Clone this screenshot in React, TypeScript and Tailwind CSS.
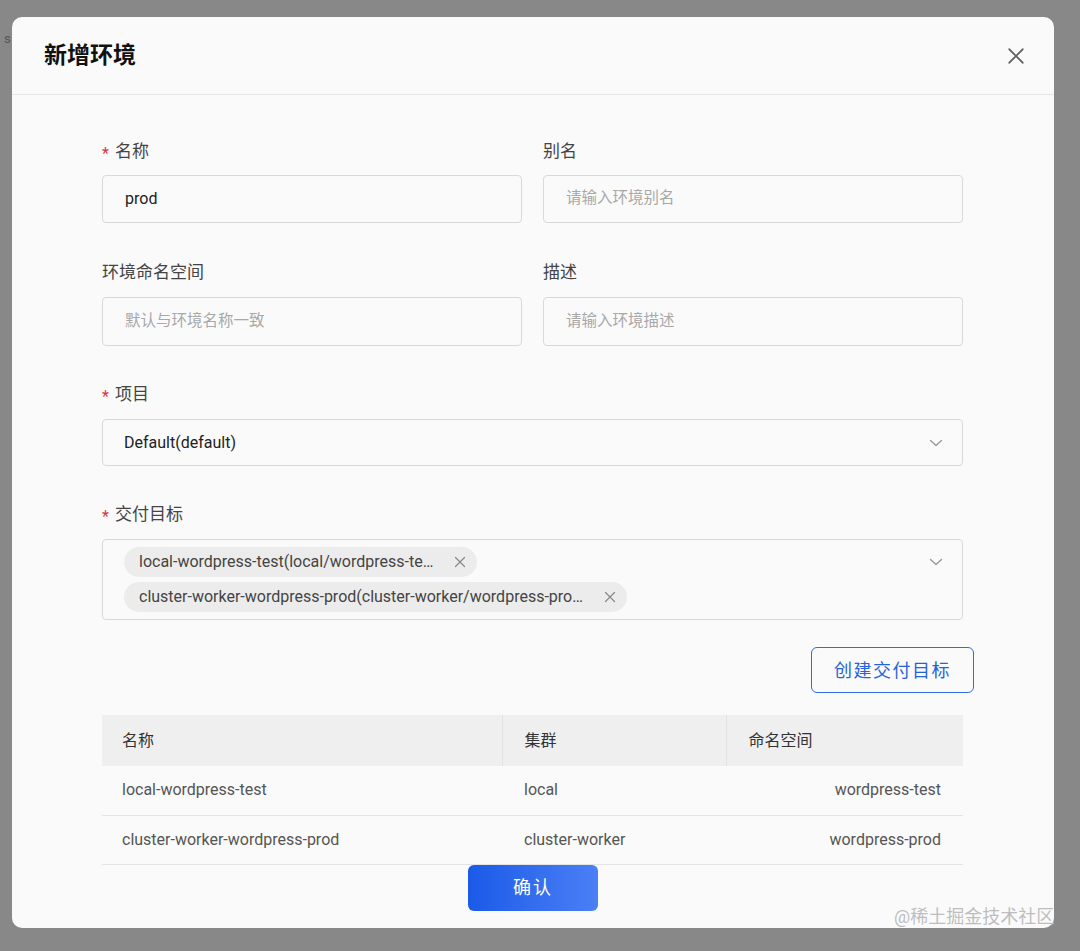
import React from "react";

const font = "font-['Roboto','Noto_Sans_CJK_SC',sans-serif]";

function Label({ text, required }: { text: string; required?: boolean }) {
  return (
    <div className="flex h-6 items-center text-[17px] text-[#444]">
      {required && <span className="mr-[6px] mt-[3px] text-[16px] text-[#d9363e]">*</span>}
      <span>{text}</span>
    </div>
  );
}

function Chevron() {
  return (
    <svg width="16" height="16" viewBox="0 0 16 16" fill="none" className="text-[#999]">
      <path d="M2.5 5.5 L8 10.5 L13.5 5.5" stroke="currentColor" strokeWidth="1.4" strokeLinecap="round" strokeLinejoin="round" />
    </svg>
  );
}

function Cross({ size = 12, color = "#777" }: { size?: number; color?: string }) {
  return (
    <svg width={size} height={size} viewBox="0 0 12 12" fill="none">
      <path d="M1.5 1.5 L10.5 10.5 M10.5 1.5 L1.5 10.5" stroke={color} strokeWidth="1.2" strokeLinecap="round" />
    </svg>
  );
}

function Tag({ text }: { text: string }) {
  return (
    <div className="flex h-[30px] w-fit items-center rounded-full bg-[#ececec] pl-[15px] pr-[9px] text-[16px] text-[#444]">
      <span>{text}</span>
      <span className="ml-[19px] flex h-4 w-4 items-center justify-center">
        <Cross size={12} color="#888" />
      </span>
    </div>
  );
}

const rows = [
  { name: "local-wordpress-test", cluster: "local", ns: "wordpress-test" },
  { name: "cluster-worker-wordpress-prod", cluster: "cluster-worker", ns: "wordpress-prod" },
];

export default function App() {
  return (
    <div className={`relative h-[951px] w-[1080px] overflow-hidden bg-[#888888] ${font}`}>
      <span className="absolute left-[4px] top-[29px] text-[13px] text-[#555]">s</span>

      <div className="ml-[12px] mt-[17px] flex h-[911px] w-[1042px] flex-col rounded-[10px] bg-[#fafafa]">
        {/* header */}
        <div className="flex h-[78px] shrink-0 items-center justify-between border-b border-[#e6e6e6] pl-[32px] pr-[26px]">
          <h2 className="mt-[2px] text-[23px] font-bold text-[#111]">新增环境</h2>
          <button className="flex h-6 w-6 items-center justify-center">
            <Cross size={18} color="#666" />
          </button>
        </div>

        {/* body */}
        <div className="ml-[90px] flex w-[861px] flex-col pt-[45px]">
          <div className="grid grid-cols-2 gap-x-[21px]">
            <div>
              <Label text="名称" required />
              <div className="mt-[11px] flex h-[48px] items-center rounded-[4px] border border-[#d9d9d9] bg-[#fafafa] px-[22px] text-[16px] text-[#222]">
                prod
              </div>
            </div>
            <div>
              <Label text="别名" />
              <div className="mt-[11px] flex h-[48px] items-center rounded-[4px] border border-[#d9d9d9] bg-[#fafafa] px-[22px] text-[15.5px] text-[#a8a8a8]">
                请输入环境别名
              </div>
            </div>
            <div className="mt-[38px]">
              <Label text="环境命名空间" />
              <div className="mt-[12px] flex h-[49px] items-center rounded-[4px] border border-[#d9d9d9] bg-[#fafafa] px-[22px] text-[15.5px] text-[#a8a8a8]">
                默认与环境名称一致
              </div>
            </div>
            <div className="mt-[38px]">
              <Label text="描述" />
              <div className="mt-[12px] flex h-[49px] items-center rounded-[4px] border border-[#d9d9d9] bg-[#fafafa] px-[22px] text-[15.5px] text-[#a8a8a8]">
                请输入环境描述
              </div>
            </div>
          </div>

          <div className="mt-[37px]">
            <Label text="项目" required />
            <div className="mt-[12px] flex h-[47px] items-center justify-between rounded-[4px] border border-[#d9d9d9] bg-[#fafafa] pl-[21px] pr-[18px] text-[16px] text-[#222]">
              <span>Default(default)</span>
              <Chevron />
            </div>
          </div>

          <div className="mt-[37px]">
            <Label text="交付目标" required />
            <div className="mt-[12px] flex h-[81px] items-start justify-between rounded-[4px] border border-[#d9d9d9] bg-[#fafafa] pl-[21px] pr-[18px] pt-[7px]">
              <div className="flex flex-col gap-[5px]">
                <Tag text="local-wordpress-test(local/wordpress-te…" />
                <Tag text="cluster-worker-wordpress-prod(cluster-worker/wordpress-pro…" />
              </div>
              <div className="mt-[7px]">
                <Chevron />
              </div>
            </div>
          </div>

          <div className="mr-[-11px] mt-[27px] flex justify-end">
            <button className="flex h-[46px] w-[163px] items-center justify-center rounded-[6px] border border-[#2f6be6] text-[18px] tracking-[1.5px] text-[#2463de]">
              创建交付目标
            </button>
          </div>

          <table className="mt-[22px] w-full border-collapse text-left">
            <thead>
              <tr className="h-[51px] bg-[#efefef] text-[16px] text-[#333]">
                <th className="w-[400px] pl-[20px] font-normal">名称</th>
                <th className="w-[224px] border-l border-[#e2e2e2] pl-[22px] font-normal">集群</th>
                <th className="border-l border-[#e2e2e2] pl-[22px] font-normal">命名空间</th>
              </tr>
            </thead>
            <tbody className="text-[16px] text-[#555]">
              {rows.map((r) => (
                <tr key={r.name} className="h-[49px] border-b border-[#e4e4e4]">
                  <td className="pl-[20px]">{r.name}</td>
                  <td className="pl-[22px]">{r.cluster}</td>
                  <td className="pr-[22px] text-right">{r.ns}</td>
                </tr>
              ))}
            </tbody>
          </table>
        </div>

        <div className="flex justify-center">
          <button className="flex h-[46px] w-[130px] items-center justify-center rounded-[6px] bg-gradient-to-r from-[#1a5ae8] to-[#4a7ff5] text-[18px] tracking-[2px] text-white">
            确认
          </button>
        </div>
      </div>

      <span className="absolute left-[894px] top-[903px] text-[18px] text-[#bdbdbd] [text-shadow:0_0_1px_#fff]">
        @稀土掘金技术社区
      </span>
    </div>
  );
}
